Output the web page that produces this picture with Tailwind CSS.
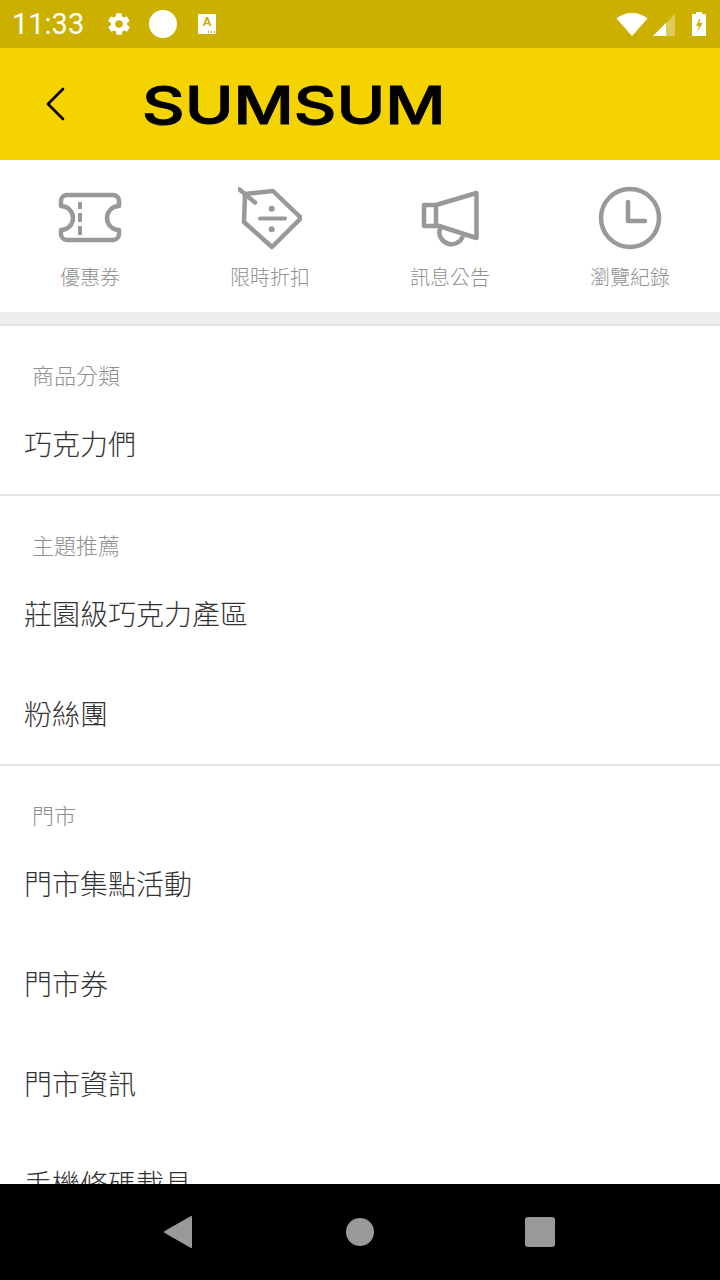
<!DOCTYPE html>
<html lang="zh-Hant">
<head>
  <meta charset="UTF-8" />
  <meta name="viewport" content="width=device-width, initial-scale=1" />
  <title>SUMSUM</title>
  <script src="https://cdn.jsdelivr.net/npm/@tailwindcss/browser@4"></script>
</head>
<body class="bg-white">
  <div class="w-[720px] h-[1280px] flex flex-col overflow-hidden font-['Noto_Sans_CJK_TC','Noto_Sans',sans-serif]">

    <!-- status bar -->
    <div class="h-12 shrink-0 bg-[#ccb000] flex items-center text-white">
      <span class="ml-3 w-[72px] text-[29px] leading-none font-['Roboto',sans-serif]">11:33</span>
      <svg class="ml-[22px]" width="26" height="26" viewBox="0 0 24 24" fill="#fff"><path d="M19.4 13a7.5 7.5 0 0 0 0-2l2.1-1.6a.5.5 0 0 0 .1-.6l-2-3.5a.5.5 0 0 0-.6-.2l-2.5 1a7.300 7.300 0 0 0-1.700-1l-.4-2.700a.5.500 0 0 0-.5-.4h-4a.5.5 0 0 0-.5.4l-.4 2.700a7.300 7.300 0 0 0-1.700 1l-2.500-1a.5.5 0 0 0-.6.2l-2 3.500a.5.5 0 0 0 .1.600L4.600 11a7.500 7.500 0 0 0 0 2l-2.100 1.600a.5.5 0 0 0-.1.600l2 3.500c.1.200.4.300.6.200l2.500-1c.5.400 1.100.700 1.700 1l.4 2.700c0 .2.200.4.500.4h4c.2 0 .5-.2.500-.4l.4-2.700c.6-.3 1.200-.6 1.700-1l2.500 1c.2.100.5 0 .6-.2l2-3.500a.5.500 0 0 0-.1-.6zM12 15.500a3.500 3.500 0 1 1 0-7 3.500 3.500 0 0 1 0 7z"/></svg>
      <div class="ml-[17px] w-7 h-7 rounded-full bg-white"></div>
      <div class="ml-[21px] w-[18px] h-[20px] bg-white relative text-[#ccb000] text-[13px] leading-[15px] font-bold text-center font-['Roboto',sans-serif]">A
        <div class="absolute right-[1px] bottom-[1px] w-[8px] h-[2px] bg-[radial-gradient(circle,#ccb000_1px,transparent_1px)] bg-[length:3px_2px]"></div>
      </div>
      <div class="ml-auto flex items-center">
        <svg width="32" height="24" viewBox="0 0 32 24"><path d="M0.500 6.500C4.500 3 10 1 16 1s11.500 2 15.500 5.500L16 24z" fill="#fff"/></svg>
        <svg class="ml-[5px]" width="23" height="24" viewBox="0 0 23 24"><path d="M0 24L22 2v22z" fill="#fff" fill-opacity=".35"/><path d="M0 24l13-13v13z" fill="#fff"/></svg>
        <svg class="ml-[16px] mr-[14px]" width="14" height="24" viewBox="0 0 14 24"><path d="M4 0h6v2h4v22H0V2h4z" fill="#fff"/><path d="M8.500 5L4 14h3l-1.500 6L10.500 11H7.500z" fill="#ccb000"/></svg>
      </div>
    </div>

    <!-- app bar -->
    <div class="h-28 shrink-0 bg-[#f4d300] flex items-center">
      <svg class="ml-[46px]" width="20" height="34" viewBox="0 0 20 34" fill="none" stroke="#000" stroke-width="2.600" stroke-linecap="round" stroke-linejoin="round"><path d="M17 2L2 17l15 15"/></svg>
      <div class="ml-[76px] mt-[3px] w-[240px] text-[52px] leading-none font-medium text-black font-['Inter',sans-serif] origin-left scale-x-[1.27] [-webkit-text-stroke:1px_#000]">SUMSUM</div>
    </div>

    <!-- shortcuts -->
    <div class="h-[152px] shrink-0 grid grid-cols-4 text-[#909090]">
      <div class="flex flex-col items-center pt-[26px]">
        <svg width="64" height="64" viewBox="0 0 64 64" fill="none" stroke="#999" stroke-width="4.500" stroke-linejoin="round"><path d="M9 9h46a6 6 0 0 1 6 6v5a12 12 0 0 0 0 24v4a6 6 0 0 1-6 6H9a6 6 0 0 1-6-6v-4a12 12 0 0 0 0-24v-5a6 6 0 0 1 6-6z"/><path d="M22 16v7M22 27v9M22 40v9" stroke-width="4"/></svg>
        <span class="mt-[12px] text-[20px] leading-[30px] font-light">優惠券</span>
      </div>
      <div class="flex flex-col items-center pt-[26px]">
        <svg width="64" height="64" viewBox="0 0 64 64" fill="none" stroke="#999" stroke-width="4.500" stroke-linejoin="round" stroke-linecap="round"><path d="M7 8l28-3 28 27-29 29L6 36z"/><path d="M1.500 3.500L17 16.500"/><path d="M22 32.500h25" stroke-width="4"/><circle cx="33.700" cy="22.700" r="3" fill="#999" stroke="none"/><circle cx="33.700" cy="43.300" r="3" fill="#999" stroke="none"/></svg>
        <span class="mt-[12px] text-[20px] leading-[30px] font-light">限時折扣</span>
      </div>
      <div class="flex flex-col items-center pt-[26px]">
        <svg width="64" height="64" viewBox="0 0 64 64" fill="none" stroke="#999" stroke-width="4.500" stroke-linejoin="round"><path d="M6 19h12v21H6zM18 19L58.500 7v45L18 39z"/><path d="M22 42a12 12 0 0 0 23 8"/></svg>
        <span class="mt-[12px] text-[20px] leading-[30px] font-light">訊息公告</span>
      </div>
      <div class="flex flex-col items-center pt-[26px]">
        <svg width="64" height="64" viewBox="0 0 64 64" fill="none" stroke="#999" stroke-width="4.500" stroke-linecap="round" stroke-linejoin="round"><circle cx="32" cy="32" r="29"/><path d="M30 16v19h17"/></svg>
        <span class="mt-[12px] text-[20px] leading-[30px] font-light">瀏覽紀錄</span>
      </div>
    </div>

    <div class="h-3 shrink-0 bg-[#eeeeee]"></div>

    <!-- menu list -->
    <div class="flex-1 min-h-0 overflow-hidden text-[28px] font-light text-[#333]">
      <section class="border-t-2 border-[#e2e2e2]">
        <h2 class="h-[68px] pl-[32px] pt-[32px] text-[22px] leading-[32px] font-light text-[#909090]">商品分類</h2>
        <div class="h-[100px] pl-[24px] pb-[2px] flex items-center">巧克力們</div>
      </section>
      <section class="border-t-2 border-[#e2e2e2]">
        <h2 class="h-[68px] pl-[32px] pt-[32px] text-[22px] leading-[32px] font-light text-[#909090]">主題推薦</h2>
        <div class="h-[100px] pl-[24px] pb-[2px] flex items-center">莊園級巧克力產區</div>
        <div class="h-[100px] pl-[24px] pb-[2px] flex items-center">粉絲團</div>
      </section>
      <section class="border-t-2 border-[#e2e2e2]">
        <h2 class="h-[68px] pl-[32px] pt-[32px] text-[22px] leading-[32px] font-light text-[#909090]">門市</h2>
        <div class="h-[100px] pl-[24px] pb-[2px] flex items-center">門市集點活動</div>
        <div class="h-[100px] pl-[24px] pb-[2px] flex items-center">門市券</div>
        <div class="h-[100px] pl-[24px] pb-[2px] flex items-center">門市資訊</div>
        <div class="h-[100px] pl-[24px] pb-[2px] flex items-center">手機條碼載具</div>
      </section>
    </div>

    <!-- navigation bar -->
    <div class="h-24 shrink-0 bg-black flex items-center pl-[164px]">
      <svg width="28" height="32" viewBox="0 0 28 32"><path d="M28 1v30a1 1 0 0 1-1.500.8L.7 17a1.300 1.300 0 0 1 0-2L26.500.2A1 1 0 0 1 28 1z" fill="#999"/></svg>
      <div class="ml-[154px] w-7 h-7 rounded-full bg-[#999]"></div>
      <div class="ml-[151px] w-[30px] h-[30px] rounded-[3px] bg-[#999]"></div>
    </div>
  </div>
</body>
</html>
